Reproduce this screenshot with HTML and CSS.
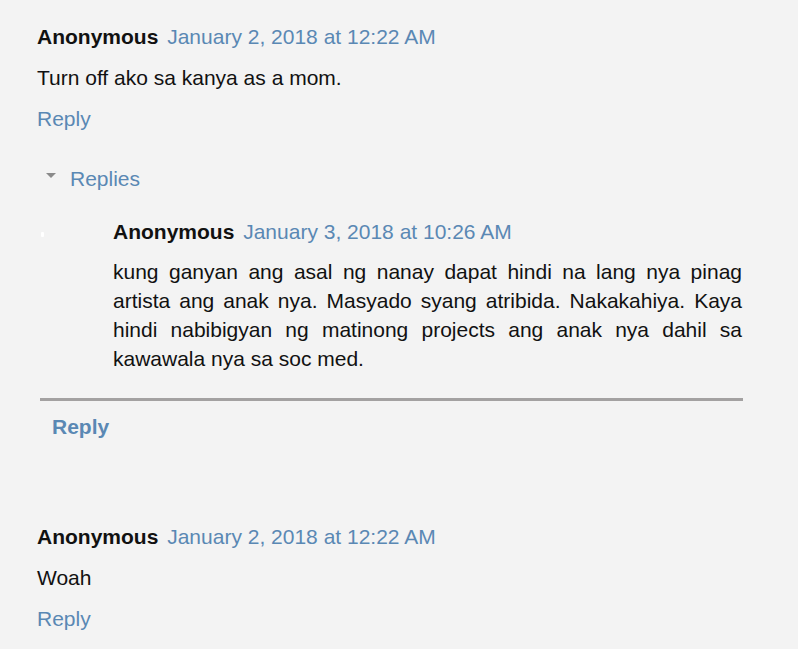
FILE: index.html
```html
<!DOCTYPE html>
<html>
<head>
<meta charset="utf-8">
<link rel="stylesheet" href="styles.css">
</head>
<body>
<div class="comments">
  <div class="comment">
    <div class="comment-header"><span class="user">Anonymous</span> <a class="date" href="#">January 2, 2018 at 12:22 AM</a></div>
    <p class="comment-content">Turn off ako sa kanya as a mom.</p>
    <a class="reply-link" href="#">Reply</a>
    <div class="thread">
      <div class="thread-toggle"><span class="arrow"></span><a class="toggle-label" href="#">Replies</a></div>
      <div class="thread-chrome">
        <div class="reply-comment">
          <span class="avatar"></span>
          <div class="comment-header"><span class="user">Anonymous</span> <a class="date" href="#">January 3, 2018 at 10:26 AM</a></div>
          <p class="comment-content justified">kung ganyan ang asal ng nanay dapat hindi na lang nya pinag artista ang anak nya. Masyado syang atribida. Nakakahiya. Kaya hindi nabibigyan ng matinong projects ang anak nya dahil sa kawawala nya sa soc med.</p>
        </div>
        <div class="continue">
          <a class="continue-link" href="#">Reply</a>
        </div>
      </div>
    </div>
  </div>
  <div class="comment second">
    <div class="comment-header"><span class="user">Anonymous</span> <a class="date" href="#">January 2, 2018 at 12:22 AM</a></div>
    <p class="comment-content">Woah</p>
    <a class="reply-link" href="#">Reply</a>
  </div>
</div>
</body>
</html>
```
FILE: styles.css
```css
html, body {
  margin: 0;
  padding: 0;
  background: #f3f3f3;
}
body {
  font-family: "Liberation Sans", Arial, sans-serif;
  font-size: 21px;
  line-height: 29px;
  color: #111;
}
a {
  color: #5a88b4;
  text-decoration: none;
}
.comments {
  padding: 22px 56px 0 37px;
}
.comment-header {
  height: 29px;
  white-space: nowrap;
}
.user {
  font-weight: bold;
  color: #111;
  margin-right: 3px;
}
.comment-content {
  margin: 12px 0 12px 0;
}
.justified {
  text-align: justify;
  margin: 11px 0 0 0;
}
.reply-link {
  display: block;
  width: max-content;
}
.thread {
  margin-top: 31px;
}
.thread-toggle {
  display: flex;
  align-items: center;
  height: 29px;
}
.arrow {
  width: 0;
  height: 0;
  border-left: 5px solid transparent;
  border-right: 5px solid transparent;
  border-top: 5px solid #8a8a8a;
  margin: -6px 0 0 9px;
}
.toggle-label {
  margin-left: 14px;
}
.reply-comment {
  position: relative;
  margin-top: 24px;
  padding-left: 76px;
}
.avatar {
  position: absolute;
  left: 4px;
  top: 15px;
  width: 3px;
  height: 5px;
  background: #ffffff;
  border-radius: 1px;
}
.continue {
  margin: 25px -1px 0 3px;
  border-top: 3px solid #a3a1a1;
  padding: 11px 0 0 12px;
}
.continue-link {
  font-weight: bold;
}
.second {
  margin-top: 81px;
}
```
